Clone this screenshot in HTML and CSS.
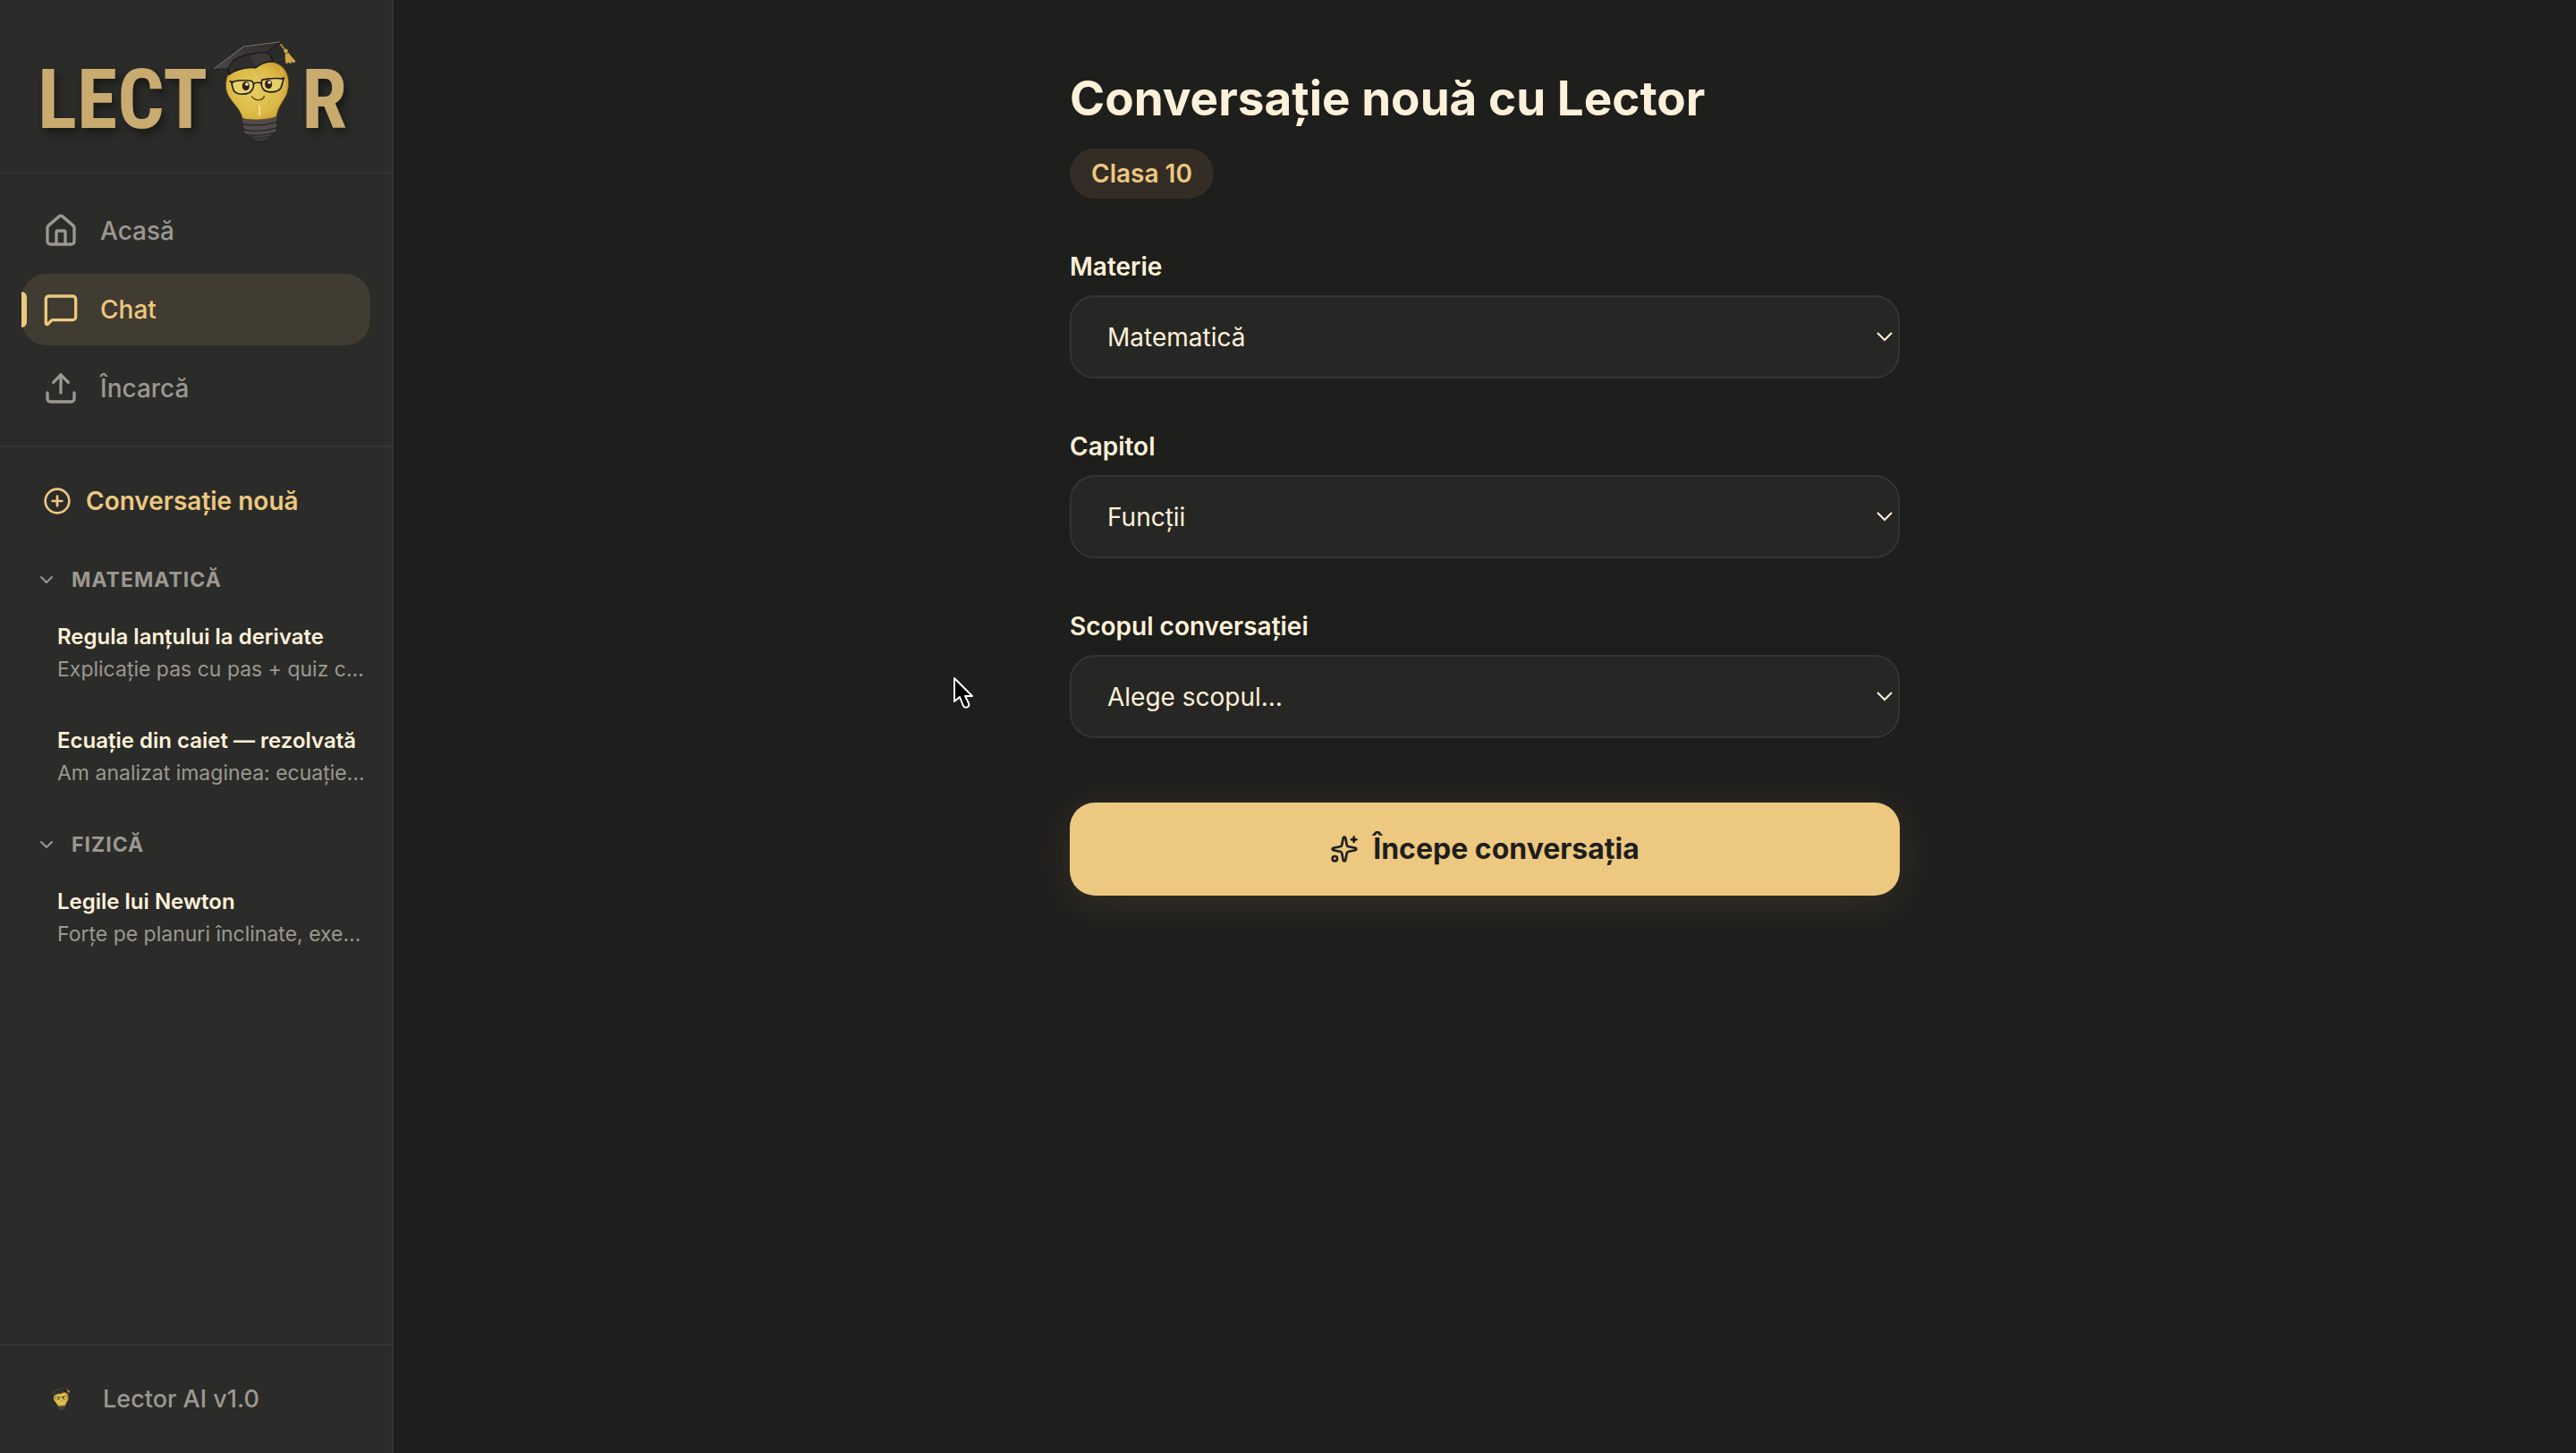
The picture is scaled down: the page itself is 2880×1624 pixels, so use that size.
FILE: index.html
```html
<!DOCTYPE html>
<html lang="ro">
<head>
<meta charset="utf-8">
<meta name="viewport" content="width=device-width, initial-scale=1">
<title>Lector – Conversație nouă</title>
<link rel="stylesheet" href="styles.css">
</head>
<body>
<svg class="defs" aria-hidden="true">
  <defs>
    <radialGradient id="glass" cx="0.45" cy="0.5" r="0.7">
      <stop offset="0" stop-color="#e4cd62"/>
      <stop offset="0.6" stop-color="#dbb945"/>
      <stop offset="0.9" stop-color="#c9962f"/>
      <stop offset="1" stop-color="#a87526"/>
    </radialGradient>
    <linearGradient id="board" x1="0" y1="1" x2="1" y2="0">
      <stop offset="0" stop-color="#4a4746"/>
      <stop offset="1" stop-color="#2e2b2b"/>
    </linearGradient>
    <symbol id="bulb" viewBox="715 135 290 350">
      <path d="M846 458Q852 476 880 479Q908 476 914 456Z" fill="#3a3735" stroke="#1c1a19" stroke-width="2"/>
      <path d="M819 400L935 394Q938 404 934 412Q938 424 934 431Q936 441 930 447L912 458Q880 466 846 460L827 452Q822 443 826 437Q819 428 822 420Q816 410 819 400Z" fill="#504b48" stroke="#1f1c1b" stroke-width="2"/>
      <path d="M822 419Q880 428 934 412M824 437Q880 447 934 431M828 453Q880 461 930 447" fill="none" stroke="#1f1c1b" stroke-width="3"/>
      <path d="M766 270C772 236 812 215 862 215C890 205 930 206 952 226C976 246 978 282 970 312C962 338 938 356 934 394C900 406 850 406 820 400C814 366 778 342 768 312C763 298 764 284 766 270Z" fill="url(#glass)" stroke="#5a4115" stroke-width="2"/>
      <path d="M848 240Q864 254 868 266M884 262Q888 246 902 238" fill="none" stroke="#efe08a" stroke-width="4" opacity=".3"/>
      <path d="M946 236Q964 262 960 300" fill="none" stroke="#e9d37a" stroke-width="5" stroke-linecap="round" opacity=".4"/>
      <path d="M876 358Q880 374 876 388" fill="none" stroke="#f6ebb4" stroke-width="5" stroke-linecap="round" opacity=".8"/>
      <path d="M771 216C776 192 830 174 892 178C910 182 918 196 921 209Q890 208 864 230Q812 226 775 253Q770 234 771 216Z" fill="#302d2d" stroke="#151313" stroke-width="4"/>
      <path d="M846 190L864 228L892 212L918 206Q912 184 896 178Z" fill="#403c3b" opacity=".7"/>
      <path d="M722 236L823 158L948 142L904 178Q830 178 788 206L771 233Z" fill="url(#board)" stroke="#1a1818" stroke-width="3" stroke-linejoin="round"/>
      <path d="M724 234L823 159L946 143" fill="none" stroke="#7a7675" stroke-width="3"/>
      <path d="M947 151L962 170" fill="none" stroke="#c59a3e" stroke-width="6" stroke-dasharray="7 2"/>
      <circle cx="965" cy="174" r="7" fill="#d3a548"/>
      <path d="M963 182L974 180Q986 196 998 208L990 214L984 208L982 217L974 212L966 217Q960 200 963 182Z" fill="#d3a548"/>
      <g fill="#e8d975" fill-opacity=".7" stroke="#231d15" stroke-width="5" stroke-linejoin="round">
        <path d="M783 278Q812 268 850 274Q860 280 856 296Q850 318 822 318Q792 320 787 296Z"/>
        <path d="M886 270Q922 262 957 267Q954 284 948 298Q938 312 912 311Q888 310 884 290Q882 276 886 270Z"/>
        <path d="M776 274L790 280M856 284Q870 276 884 282M950 266L961 264" fill="none"/>
      </g>
      <ellipse cx="831" cy="291" rx="12" ry="15" fill="#33200f"/>
      <ellipse cx="907" cy="285" rx="12" ry="15" fill="#33200f"/>
      <circle cx="834" cy="285" r="5" fill="#fff"/>
      <circle cx="910" cy="279" r="5" fill="#fff"/>
      <path d="M851 326Q860 338 874 338Q888 337 893 325" fill="none" stroke="#5c3a12" stroke-width="4" stroke-linecap="round"/>
    </symbol>
    <symbol id="chevron" viewBox="0 0 24 24"><path d="m6 9 6 6 6-6"/></symbol>
  </defs>
</svg>

<div class="app">
  <aside class="sidebar">
    <a class="logo" href="#" aria-label="Lector">
      <span>LECT</span>
      <svg class="logo-bulb" aria-hidden="true"><use href="#bulb"/></svg>
      <span>R</span>
    </a>

    <nav class="nav">
      <a class="nav-item" href="#">
        <svg class="icon icon-lg" viewBox="0 0 24 24" aria-hidden="true"><path d="M15 21v-8a1 1 0 0 0-1-1h-4a1 1 0 0 0-1 1v8"/><path d="M3 10a2 2 0 0 1 .709-1.528l7-5.999a2 2 0 0 1 2.582 0l7 5.999A2 2 0 0 1 21 10v9a2 2 0 0 1-2 2H5a2 2 0 0 1-2-2z"/></svg>
        Acasă
      </a>
      <a class="nav-item is-active" href="#" aria-current="page">
        <svg class="icon icon-lg" viewBox="0 0 24 24" aria-hidden="true"><path d="M22 17a2 2 0 0 1-2 2H6.828a2 2 0 0 0-1.414.586l-2.202 2.202A.71.71 0 0 1 2 21.286V5a2 2 0 0 1 2-2h16a2 2 0 0 1 2 2z"/></svg>
        Chat
      </a>
      <a class="nav-item" href="#">
        <svg class="icon icon-lg" viewBox="0 0 24 24" aria-hidden="true"><path d="M12 3v12"/><path d="m17 8-5-5-5 5"/><path d="M21 15v4a2 2 0 0 1-2 2H5a2 2 0 0 1-2-2v-4"/></svg>
        Încarcă
      </a>
    </nav>

    <div class="history">
      <button class="new-chat" type="button">
        <svg class="icon icon-md" viewBox="0 0 24 24" aria-hidden="true"><circle cx="12" cy="12" r="10"/><path d="M8 12h8"/><path d="M12 8v8"/></svg>
        Conversație nouă
      </button>

      <section class="group">
        <button class="group-head" type="button" aria-expanded="true">
          <svg class="icon icon-sm" aria-hidden="true"><use href="#chevron"/></svg>
          Matematică
        </button>
        <a class="chat" href="#">
          <span class="chat-title">Regula lanțului la derivate</span>
          <span class="chat-text">Explicație pas cu pas + quiz c…</span>
        </a>
        <a class="chat" href="#">
          <span class="chat-title">Ecuație din caiet — rezolvată</span>
          <span class="chat-text">Am analizat imaginea: ecuație…</span>
        </a>
      </section>

      <section class="group">
        <button class="group-head" type="button" aria-expanded="true">
          <svg class="icon icon-sm" aria-hidden="true"><use href="#chevron"/></svg>
          Fizică
        </button>
        <a class="chat" href="#">
          <span class="chat-title">Legile lui Newton</span>
          <span class="chat-text">Forțe pe planuri înclinate, exe…</span>
        </a>
      </section>
    </div>

    <footer class="sidebar-foot">
      <svg class="foot-bulb" aria-hidden="true"><use href="#bulb"/></svg>
      <span>Lector AI v1.0</span>
    </footer>
  </aside>

  <main class="main">
    <div class="panel">
      <h1 class="title">Conversație nouă cu Lector</h1>
      <span class="badge">Clasa 10</span>

      <form class="form">
        <div class="field">
          <label for="materie">Materie</label>
          <div class="select">
            <select id="materie"><option>Matematică</option><option>Fizică</option></select>
            <svg class="select-arrow" viewBox="0 0 18 12" aria-hidden="true"><path d="m1 1 8 8 8-8"/></svg>
          </div>
        </div>
        <div class="field">
          <label for="capitol">Capitol</label>
          <div class="select">
            <select id="capitol"><option>Funcții</option></select>
            <svg class="select-arrow" viewBox="0 0 18 12" aria-hidden="true"><path d="m1 1 8 8 8-8"/></svg>
          </div>
        </div>
        <div class="field">
          <label for="scop">Scopul conversației</label>
          <div class="select">
            <select id="scop"><option>Alege scopul…</option></select>
            <svg class="select-arrow" viewBox="0 0 18 12" aria-hidden="true"><path d="m1 1 8 8 8-8"/></svg>
          </div>
        </div>
        <button class="start" type="button">
          <svg class="icon icon-md" viewBox="0 0 24 24" aria-hidden="true"><path d="M11.017 2.814a1 1 0 0 1 1.966 0l1.051 5.558a2 2 0 0 0 1.594 1.594l5.558 1.051a1 1 0 0 1 0 1.966l-5.558 1.051a2 2 0 0 0-1.594 1.594l-1.051 5.558a1 1 0 0 1-1.966 0l-1.051-5.558a2 2 0 0 0-1.594-1.594l-5.558-1.051a1 1 0 0 1 0-1.966l5.558-1.051a2 2 0 0 0 1.594-1.594z"/><path d="M20 2v4"/><path d="M22 4h-4"/><circle cx="4" cy="20" r="2"/></svg>
          Începe conversația
        </button>
      </form>
    </div>
  </main>
</div>

<svg class="pointer" viewBox="0 0 26 38" aria-hidden="true"><path d="M2 2V28L8 23L12 33Q14 36 17 34Q19 33 18 30L14 22H22Z" fill="#000" stroke="#fff" stroke-width="2" stroke-linejoin="round"/></svg>
</body>
</html>
```

FILE: styles.css
```css
:root {
  --bg: #1e1e1c;
  --sidebar: #2b2b29;
  --field: #262624;
  --line: #343432;
  --gold: #edc880;
  --cream: #fef1d9;
  --muted: #9b9890;
}

* { box-sizing: border-box; }

body {
  margin: 0;
  background: var(--bg);
  color: var(--cream);
  font: 400 28px/36px Inter, "Open Sans", sans-serif;
}

a { color: inherit; text-decoration: none; }
button { border: 0; background: none; padding: 0; font: inherit; color: inherit; text-align: left; cursor: pointer; }

.defs { position: absolute; width: 0; height: 0; }

.app { display: flex; min-height: 100vh; }

.icon { flex: none; fill: none; stroke: currentColor; stroke-width: 2; stroke-linecap: round; stroke-linejoin: round; }
.icon-lg { width: 40px; height: 40px; }
.icon-md { width: 32px; height: 32px; }
.icon-sm { width: 24px; height: 24px; }

/* Sidebar */
.sidebar {
  display: flex;
  flex-direction: column;
  flex: none;
  width: 440px;
  background: var(--sidebar);
  border-right: 2px solid var(--line);
  color: var(--muted);
}

.logo {
  display: flex;
  align-items: center;
  gap: 4px;
  height: 194px;
  padding: 32px 42px 0;
  border-bottom: 2px solid var(--line);
  color: #c9ab70;
  font: 700 92px/96px "Liberation Sans Narrow", "Roboto Condensed", "Open Sans Condensed", sans-serif;
  text-shadow: 4px 6px 8px #1a1a18;
}
.logo-bulb { flex: none; width: 97px; height: 117px; margin-bottom: 20px; }

.nav {
  display: flex;
  flex-direction: column;
  gap: 8px;
  padding: 24px;
  border-bottom: 2px solid var(--line);
}
.nav-item {
  position: relative;
  display: flex;
  align-items: center;
  gap: 24px;
  height: 80px;
  padding: 0 24px;
  border-radius: 28px;
  font-weight: 500;
}
.nav-item.is-active { background: #403c31; color: var(--gold); }
.nav-item.is-active::before {
  content: "";
  position: absolute;
  left: 0;
  top: 20px;
  width: 6px;
  height: 40px;
  border-radius: 0 8px 8px 0;
  background: var(--gold);
}

.history { flex: 1; padding: 32px 24px; }
.new-chat {
  display: flex;
  align-items: center;
  gap: 16px;
  width: 100%;
  height: 56px;
  margin-bottom: 36px;
  padding: 0 24px;
  color: var(--gold);
  font-weight: 600;
}
.group { display: flex; flex-direction: column; margin-bottom: 16px; }
.group-head {
  display: flex;
  align-items: center;
  gap: 16px;
  height: 48px;
  padding: 0 16px;
  font-size: 23px;
  font-weight: 700;
  letter-spacing: 1px;
  text-transform: uppercase;
}
.chat { display: flex; flex-direction: column; padding: 22px 0 22px 40px; white-space: nowrap; }
.chat-title { color: var(--cream); font-size: 24px; font-weight: 600; line-height: 36px; }
.chat-text { font-size: 23px; line-height: 36px; }

.sidebar-foot {
  display: flex;
  align-items: center;
  gap: 36px;
  height: 122px;
  padding: 0 56px;
  border-top: 2px solid var(--line);
  font-size: 27px;
  font-weight: 500;
}
.foot-bulb { flex: none; width: 23px; height: 28px; }

/* Main */
.main { flex: 1; padding: 72px 32px; }
.panel { max-width: 928px; margin: 0 auto; }
.title { margin: 0 0 18px; font-size: 53px; line-height: 76px; font-weight: 700; }
.badge {
  display: block;
  width: fit-content;
  padding: 10px 24px;
  border-radius: 28px;
  background: #332d25;
  color: var(--gold);
  font-weight: 600;
}
.form { display: flex; flex-direction: column; gap: 56px; margin-top: 56px; }
.field { display: flex; flex-direction: column; gap: 12px; }
.field label { font-weight: 600; line-height: 40px; }
.select { position: relative; }
.select select {
  display: block;
  width: 100%;
  height: 93px;
  padding: 0 40px;
  border: 2px solid var(--line);
  border-radius: 28px;
  appearance: none;
  background: var(--field);
  color: var(--cream);
  font: inherit;
}
.select-arrow {
  position: absolute;
  right: 8px;
  top: 41px;
  width: 18px;
  height: 12px;
  fill: none;
  stroke: var(--cream);
  stroke-width: 2;
  pointer-events: none;
}
.start {
  display: flex;
  align-items: center;
  justify-content: center;
  gap: 16px;
  height: 104px;
  margin-top: 16px;
  border-radius: 28px;
  background: var(--gold);
  box-shadow: 0 8px 48px rgba(237, 200, 128, 0.12);
  color: #1e1e1c;
  font-size: 32px;
  font-weight: 700;
}

.pointer { position: fixed; left: 1065px; top: 756px; width: 26px; height: 38px; pointer-events: none; }
```
